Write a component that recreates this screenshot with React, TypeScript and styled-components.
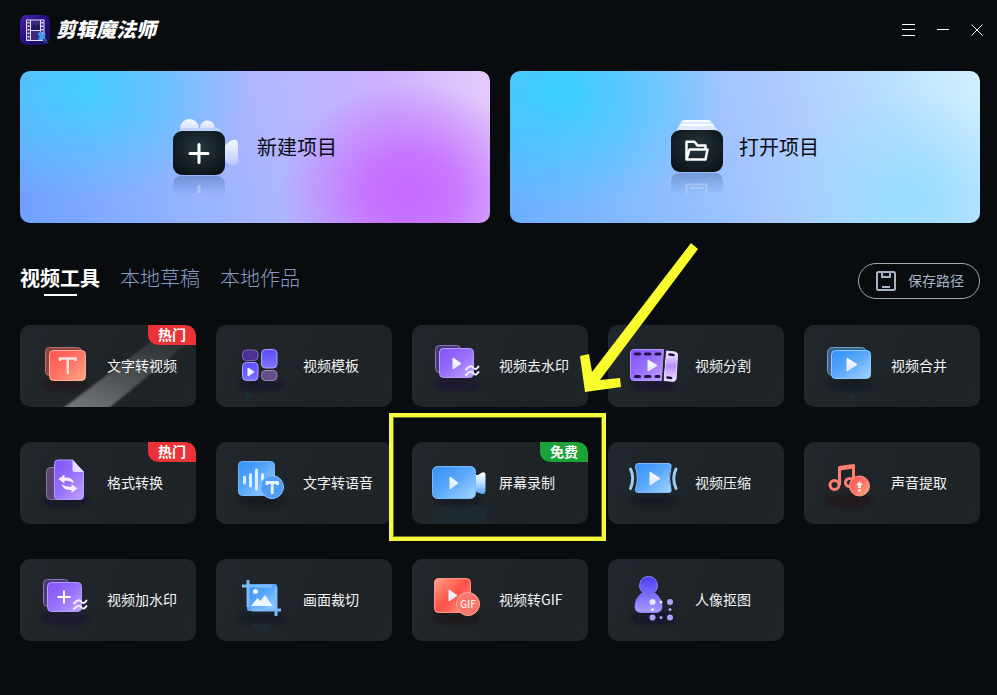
import React from "react";
import styled, { createGlobalStyle } from "styled-components";

const GlobalStyle = createGlobalStyle`
  * { box-sizing: border-box; }
  body { margin: 0; background: #080c0f; }
  button { border: 0; padding: 0; margin: 0; background: none; color: inherit; font: inherit; cursor: pointer; }
  svg { display: block; flex: none; }
`;

const Window = styled.div`
  min-height: 100vh;
  background: #080c0f;
  color: #f2f4f6;
  font-family: "Noto Sans CJK SC", "Noto Sans", sans-serif;
  overflow: hidden;
`;

const Header = styled.header`
  height: 60px;
  display: flex;
  align-items: center;
  justify-content: space-between;
  padding: 0 3px 0 20px;
`;

const Brand = styled.div`
  display: flex;
  align-items: center;
  gap: 6px;
`;

const BrandName = styled.h1`
  margin: 0;
  padding-bottom: 2px;
  font-size: 20px;
  line-height: 30px;
  font-weight: 900;
  font-style: italic;
  color: #fff;
`;

const WindowControls = styled.div`
  display: flex;
`;

const ControlButton = styled.button`
  width: 34px;
  height: 34px;
  display: flex;
  align-items: center;
  justify-content: center;
`;

const Main = styled.main`
  padding: 11px 17px 24px 20px;
`;

const Banners = styled.div`
  display: grid;
  grid-template-columns: 1fr 1fr;
  gap: 20px;
`;

const Banner = styled.button<{ $kind: "new" | "open" }>`
  height: 152px;
  border-radius: 10px;
  display: flex;
  align-items: center;
  justify-content: center;
  gap: 16px;
  color: #080b12;
  font-size: 20px;
  line-height: 30px;
  background: ${(p) =>
    p.$kind === "new"
      ? `radial-gradient(ellipse 130px 110px at 83% 80%, #c66cff 0%, #c66cffd9 35%, #c66cff00 100%),
         radial-gradient(ellipse 170px 110px at 13% 12%, #42ceff 0%, #42ceff00 100%),
         linear-gradient(75deg, #6fa0ff 0%, #8fb2ff 30%, #b2b6ff 55%, #cbb0ff 78%, #e4cdfc 100%)`
      : `radial-gradient(ellipse 150px 110px at 84% 84%, #98dcff 0%, #98dcff00 100%),
         radial-gradient(ellipse 170px 120px at 10% 14%, #38d0ff 0%, #38d0ff00 100%),
         linear-gradient(75deg, #6aaeff 0%, #8cbcff 30%, #b0caff 60%, #b8deff 80%, #d4f0ff 100%)`};
`;

const Toolbar = styled.div`
  margin: 40px 0 26px;
  display: flex;
  align-items: flex-start;
  justify-content: space-between;
`;

const Tabs = styled.nav`
  display: flex;
  gap: 20px;
`;

const Tab = styled.button<{ $active?: boolean }>`
  display: flex;
  flex-direction: column;
  align-items: center;
  font-size: 20px;
  line-height: 30px;
  font-weight: ${(p) => (p.$active ? 700 : 300)};
  color: ${(p) => (p.$active ? "#fff" : "#8a9cc4")};

  &::after {
    content: "";
    width: 33px;
    height: 2px;
    margin-top: 1px;
    background: ${(p) => (p.$active ? "#fff" : "transparent")};
  }
`;

const SaveButton = styled.button`
  height: 36px;
  padding: 0 15px 0 17px;
  display: flex;
  align-items: center;
  gap: 12px;
  border: 1px solid #a3a8b3;
  border-radius: 18px;
  color: #a9b4c8;
  font-size: 14px;
  line-height: 20px;
`;

const ToolGrid = styled.ul`
  margin: 0;
  padding: 0;
  list-style: none;
  display: grid;
  grid-template-columns: repeat(5, minmax(0, 1fr));
  gap: 35px 20px;
`;

const ToolItem = styled.li`
  position: relative;
`;

const ToolCard = styled.button`
  position: relative;
  width: 100%;
  height: 82px;
  display: flex;
  align-items: center;
  gap: 7px;
  border-radius: 10px;
  overflow: hidden;
  background: linear-gradient(110deg, #21272c, #1e2327 60%, #1f2427);
  font-size: 14px;
  line-height: 20px;
  text-align: left;
`;

const ButtonLabel = styled.span`
  position: relative;
  padding-bottom: 2px;
  white-space: nowrap;
`;

const Beam = styled.svg`
  position: absolute;
  left: 0;
  top: 0;
`;

const Badge = styled.span<{ $free?: boolean }>`
  position: absolute;
  top: 0;
  right: 0;
  width: 48px;
  height: 20px;
  line-height: 18px;
  border-radius: 0 10px 0 10px;
  background: ${(p) => (p.$free ? "#1ba337" : "#ea3238")};
  color: #fff;
  font-weight: 700;
  text-align: center;
`;

const Highlight = styled.div`
  position: absolute;
  z-index: 2;
  inset: -29px -18px -17px -23px;
  border: 4px solid #f5fb3a;
  box-shadow: inset 0 0 0 1px #6f7222;
  pointer-events: none;
`;

const Arrow = styled.svg`
  position: absolute;
  z-index: 2;
  left: 166px;
  top: -202px;
  pointer-events: none;
`;

const SharedDefs = styled.svg`
  position: absolute;
`;

const Gradient = ({ id, stops, vertical }: { id: string; stops: string[]; vertical?: boolean }) => (
  <linearGradient id={id} x1="0" y1="0" x2={vertical ? "0" : "1"} y2="1">
    {stops.map((color, i) => (
      <stop key={i} offset={i / (stops.length - 1)} stopColor={color} />
    ))}
  </linearGradient>
);

const Defs = () => (
  <SharedDefs width="0" height="0" aria-hidden>
    <defs>
      <Gradient id="red" stops={["#ff5350", "#ff7367", "#ffab86"]} />
      <Gradient id="redWarm" stops={["#ffa58b", "#ff5147", "#ff9a82"]} />
      <Gradient id="purple" stops={["#8450f8", "#9670fb", "#c2a4ff"]} />
      <Gradient id="indigo" stops={["#5a4df8", "#7d74ff"]} vertical />
      <Gradient id="portrait" stops={["#4a3df5", "#a99cff"]} vertical />
      <Gradient id="blue" stops={["#3190f8", "#5ba9fb", "#a6d6ff"]} />
      <Gradient id="lens" stops={["#ffffff", "#b9ddff", "#5ba4f5"]} vertical />
      <Gradient id="ticket" stops={["#fbf8ff", "#b88dff", "#eee5ff"]} vertical />
      <Gradient id="soft" stops={["#f7faff", "#b8c8ff"]} vertical />
      <Gradient id="light" stops={["#ffffff", "#d7e6ff"]} vertical />
      <Gradient id="logo" stops={["#4b20b0", "#24107c", "#160b50"]} />
      <radialGradient id="ink" cx="0.5" cy="0.4" r="0.75">
        <stop offset="0" stopColor="#26363f" />
        <stop offset="1" stopColor="#080e12" />
      </radialGradient>
      <linearGradient id="mirror" x1="0" y1="0" x2="0" y2="1">
        <stop offset="0" stopColor="#3d5f98" stopOpacity="0.4" />
        <stop offset="1" stopColor="#3d5f98" stopOpacity="0" />
      </linearGradient>
      <linearGradient id="beam" x1="0" y1="1" x2="0.7" y2="0">
        <stop offset="0" stopColor="#fff" stopOpacity="0.4" />
        <stop offset="0.5" stopColor="#fff" stopOpacity="0.22" />
        <stop offset="1" stopColor="#fff" stopOpacity="0.08" />
      </linearGradient>
      <filter id="blur" x="-30%" y="-100%" width="160%" height="300%">
        <feGaussianBlur stdDeviation="3" />
      </filter>
      <filter id="edge">
        <feGaussianBlur stdDeviation="1" />
      </filter>
    </defs>
  </SharedDefs>
);

const ToolIcon = ({ shade, children }: { shade: string; children: React.ReactNode }) => (
  <svg width="80" height="82" viewBox="0 0 80 82" fill="none" aria-hidden>
    <ellipse cx="45" cy="59" rx="22" ry="4" fill={shade} opacity="0.75" filter="url(#blur)" />
    {children}
  </svg>
);

const Play = ({ x, y, w, h }: { x: number; y: number; w: number; h: number }) => (
  <path
    d={`M${x} ${y}L${x + w} ${y + h / 2}L${x} ${y + h}Z`}
    fill="url(#light)"
    stroke="#eef3ff"
    strokeWidth="1"
    strokeLinejoin="round"
  />
);

const Waves = () => (
  <g stroke="#f3edff" strokeWidth="2" strokeLinecap="round">
    <path d="M54 44.5C58 40 60 41 61.5 43C63 45 65 44 66.5 41.5" />
    <path d="M54 50C58 45.5 60 46.5 61.5 48.5C63 50.5 65 49.5 66.5 47" />
  </g>
);

const TextVideoIcon = () => (
  <ToolIcon shade="#2a0e14">
    <rect x="25.5" y="22.5" width="36" height="28" rx="4" fill="#8d4646" stroke="#b5716d" />
    <rect x="29.5" y="25.5" width="36" height="30" rx="4" fill="url(#red)" stroke="#ffad94" />
    <path d="M40 36V33.5H55.5V36M47.8 33.5V49" stroke="#ffe5df" strokeWidth="2.4" />
  </ToolIcon>
);

const TemplateIcon = () => (
  <ToolIcon shade="#120d2a">
    <rect x="26.5" y="25" width="15.500" height="10.500" rx="4" fill="#4c3192" stroke="#8169b5" />
    <rect x="45.5" y="24.5" width="15.500" height="18.500" rx="4" fill="url(#indigo)" stroke="#aaa2ff" />
    <rect x="26.5" y="37.5" width="15.500" height="18" rx="4" fill="url(#indigo)" stroke="#aaa2ff" />
    <rect x="45.5" y="45.5" width="15.500" height="10" rx="4" fill="#644d8a" stroke="#9b86b8" />
    <Play x={32} y={43} w={6} h={8} />
    <path d="M30 66L37 71L30 76Z" fill="#1b3442" opacity="0.6" />
  </ToolIcon>
);

const UnmarkIcon = () => (
  <ToolIcon shade="#1e0b3a">
    <rect x="23.5" y="20.5" width="25" height="27" rx="4" fill="#493778" stroke="#8c78b5" />
    <rect x="27.5" y="23.5" width="34" height="29" rx="4" fill="url(#purple)" stroke="#b99cff" />
    <Play x={41} y={33} w={8} h={11} />
    <Waves />
  </ToolIcon>
);

const SplitIcon = () => (
  <ToolIcon shade="#1e0738">
    <path d="M26 24.5H55.5L54 55.5H26Q22.5 55.5 22.5 52V28Q22.5 24.5 26 24.5Z" fill="url(#purple)" stroke="#b398ff" />
    <path d="M27.500 29H31.500M37.500 29H42M48 29H52M27.500 51.500H31.500M37.500 51.500H42M48 51.500H51" stroke="#241346" strokeWidth="3" strokeLinecap="round" />
    <Play x={40} y={35} w={9} h={11} />
    <path d="M58.500 26L67 27Q69.5 27.5 69.5 30L68 54Q67.5 56.5 65 56.3L56 55.5Z" fill="url(#ticket)" stroke="#eadfff" />
    <path d="M57 25L54.500 56" stroke="#1f2428" strokeWidth="1.5" />
    <path d="M61.500 29.5L65.500 30M59.500 52.500L63 53" stroke="#241346" strokeWidth="2.6" strokeLinecap="round" />
  </ToolIcon>
);

const MergeIcon = () => (
  <ToolIcon shade="#0c1620">
    <rect x="23.5" y="22.5" width="39" height="28" rx="5" fill="#3a6289" stroke="#6fa0c8" />
    <rect x="27.5" y="25.5" width="39" height="28" rx="4" fill="url(#blue)" stroke="#8fc7ff" />
    <Play x={43} y={33} w={10} h={13} />
    <path d="M45 67L54 72L45 77Z" fill="#1b3442" opacity="0.4" />
  </ToolIcon>
);

const ConvertIcon = () => (
  <ToolIcon shade="#12082c">
    <rect x="26.5" y="25.5" width="25" height="32" rx="4" fill="#5a4575" stroke="#8b74a6" />
    <path d="M38 18H52.5L63.5 30V54Q63.5 57.5 60 57.5H38Q34.5 57.5 34.5 54V21.5Q34.5 18 38 18Z" fill="url(#purple)" stroke="#b79bff" />
    <path d="M52.5 17.5L64 30H54.5Q52.5 30 52.5 28Z" fill="#e6dcff" />
    <path d="M38.500 37L44.500 32.500V35.500H47Q53 36 54 41.500Q51 38.800 47 38.800H44.500V41.500Z" fill="#f5efff" />
    <path d="M57.500 46.500L51.500 51V48H49Q43 47.500 41.500 42Q45 44.700 49 44.700H51.500V42Z" fill="#f5efff" />
  </ToolIcon>
);

const SpeechIcon = () => (
  <ToolIcon shade="#0c141e">
    <rect x="22.5" y="19.5" width="36" height="34" rx="4" fill="url(#blue)" stroke="#79baff" />
    <path d="M28.5 35V41M34.5 32.5V44M40.5 28V47M46.5 32.5V38" stroke="#dceeff" strokeWidth="3" strokeLinecap="round" />
    <circle cx="56" cy="45" r="11.5" fill="#519ff5" stroke="#8ac5ff" />
    <path d="M51 43V40.5H61.5V43M56.200 40.5V52" stroke="#e6f4ff" strokeWidth="2.8" />
  </ToolIcon>
);

const RecordIcon = () => (
  <ToolIcon shade="#0c1620">
    <path d="M66 33L70 30.5Q73.5 29.5 73.5 33V49Q73.5 52.5 70 52L64 50V33Z" fill="url(#lens)" />
    <rect x="20.5" y="24.5" width="43" height="32" rx="5" fill="url(#blue)" stroke="#78b9ff" />
    <Play x={38} y={35} w={8} h={12} />
    <path d="M20 64H74V82H20Z" fill="#1b303a" opacity="0.4" />
  </ToolIcon>
);

const CompressIcon = () => (
  <ToolIcon shade="#0e131a">
    <path d="M30 21.5H61Q64 22 63 25Q60 36 63 47Q64 50.5 61 50.5H30Q27 50.5 27.5 47Q31 36 27.5 25Q27 22 30 21.5Z" fill="url(#blue)" stroke="#7cbcff" />
    <path d="M22.5 27Q27 36 22.5 46.5M68 27Q63.5 36 68 46.5" stroke="#a3c9ef" strokeWidth="3" strokeLinecap="round" />
    <Play x={42} y={30} w={10} h={13} />
  </ToolIcon>
);

const AudioIcon = () => (
  <ToolIcon shade="#250b10">
    <g stroke="#ff7d72" strokeWidth="3" strokeLinejoin="round">
      <circle cx="30.5" cy="43" r="4.5" />
      <circle cx="45.5" cy="40.5" r="4" />
      <path d="M35.5 43V25.5L49.5 23.5V40" />
      <path d="M35.5 27L49.5 25" />
    </g>
    <circle cx="55.5" cy="44" r="10" fill="url(#red)" stroke="#ff9a88" />
    <path d="M55.5 39.5L59 43H57V46H54V43H52ZM54 47.5H57V49.5H54Z" fill="#fff1ed" />
  </ToolIcon>
);

const WatermarkIcon = () => (
  <ToolIcon shade="#1e0b3a">
    <rect x="23.5" y="20.5" width="25" height="27" rx="4" fill="#493778" stroke="#8c78b5" />
    <rect x="27.5" y="23.5" width="34" height="29" rx="4" fill="url(#purple)" stroke="#b99cff" />
    <path d="M44 31.5V44.5M37.5 38H50.5" stroke="#fff" strokeWidth="2" />
    <Waves />
  </ToolIcon>
);

const CropIcon = () => (
  <ToolIcon shade="#0c1620">
    <rect x="31" y="25" width="30" height="27" rx="2" fill="url(#blue)" />
    <path d="M32 21V48M26 27H56M60 28V57M36 51H65" stroke="#7bbcf8" strokeWidth="3" />
    <circle cx="39.5" cy="32.5" r="2.5" fill="#edf7ff" />
    <path d="M35 47L41.5 39L44.5 42L49 36L56.5 47Z" fill="#edf7ff" />
    <path d="M36 65H56L49 75L44 70L41 73Z" fill="#1b3a44" opacity="0.4" />
  </ToolIcon>
);

const GifIcon = () => (
  <ToolIcon shade="#1c0b10">
    <rect x="22.5" y="19.5" width="36" height="34" rx="4" fill="url(#redWarm)" stroke="#ff9683" />
    <Play x={37} y={31} w={8} h={11} />
    <circle cx="56" cy="45" r="11.5" fill="#f9766a" stroke="#ffa898" />
    <text x="56" y="49" textAnchor="middle" fontFamily="Noto Sans CJK SC, sans-serif" fontSize="10" fontWeight="500" fill="#fff0ea">
      GIF
    </text>
  </ToolIcon>
);

const PortraitIcon = () => (
  <ToolIcon shade="#0c0b2a">
    <path
      d="M40.5 17.5A9 9 0 0 1 46 33.5Q54 39 54 48Q54 53.5 47 53.5H34Q27 53.5 27 48Q27 39 35 33.5A9 9 0 0 1 40.5 17.5Z"
      fill="url(#portrait)"
      stroke="#8d82ff"
    />
    <g fill="#eae8ff">
      <circle cx="44.5" cy="43" r="3" />
      <circle cx="53" cy="43" r="1.5" />
      <circle cx="44.5" cy="50.5" r="1.5" />
    </g>
    <g fill="#aaa3ff">
      <circle cx="62" cy="43" r="3" />
      <circle cx="62" cy="50.5" r="1.5" />
      <circle cx="44.5" cy="58.5" r="3" />
      <circle cx="53" cy="58.5" r="1.5" />
      <circle cx="62" cy="58.5" r="3" />
    </g>
  </ToolIcon>
);

const LogoIcon = () => (
  <svg width="30" height="30" viewBox="0 0 30 30" fill="none" aria-hidden>
    <rect width="30" height="30" rx="7" fill="url(#logo)" />
    <rect x="6.5" y="5" width="17.5" height="20.5" fill="#3a2a80" stroke="#e6dcff" />
    <path d="M10.5 5V25M20.5 5V25M10.5 15.5H20.5" stroke="#e6dcff" />
    <path d="M8.5 7V25M22.3 7V25" stroke="#e6dcff" strokeWidth="2" strokeDasharray="1.5 2" />
    <path d="M11 13L14 9L16 12L18 9L20 13V15H11Z" fill="#241560" />
    <path d="M21 16L22.5 19L26 19.5L24 22L27 26L25 28L22 24.5L18 25L19.5 21.5L17.5 18.5Z" fill="#3f9cf2" />
    <path d="M24 23.5L28 28L26.5 29L22.5 25Z" fill="#193a78" />
  </svg>
);

const CameraIcon = () => (
  <svg width="68" height="100" viewBox="0 0 68 100" fill="none" aria-hidden>
    <circle cx="16.5" cy="31.5" r="9.5" fill="url(#soft)" />
    <circle cx="34.5" cy="31" r="7.5" fill="url(#soft)" />
    <rect x="6" y="31" width="42" height="12" rx="5" fill="#bdd3ff" />
    <path d="M52 49Q56 44 60 43Q65 42 65 48V62Q65 68 60 68Q56 67.5 52 64Z" fill="url(#soft)" />
    <rect y="34" width="52" height="44" rx="9" fill="url(#ink)" />
    <path d="M26 47.5V65.5M17 56.5H35" stroke="#fff" strokeWidth="3" strokeLinecap="round" />
    <path d="M0 88Q0 79 9 79H43Q52 79 52 88V98H0Z" fill="url(#mirror)" />
    <path d="M26 88V96" stroke="#fff" strokeOpacity="0.3" strokeWidth="3" />
  </svg>
);

const FolderIcon = () => (
  <svg width="52" height="100" viewBox="0 0 52 100" fill="none" aria-hidden>
    <path d="M11 24Q12 23 14 23H36Q38 23 40 24L47 34H5Z" fill="#dce9ff" />
    <path d="M13 23H38L40 25H10ZM10 27H41L43 29H8Z" fill="#f8fbff" />
    <rect y="33" width="52" height="42" rx="9" fill="url(#ink)" />
    <path d="M15.5 62.5V44.8H23.5L26.5 48.5H34.5V52M15.5 62.5L18.5 52.5H36.5L34.5 62.5Z" stroke="#fff" strokeWidth="2.5" strokeLinejoin="round" />
    <path d="M0 85Q0 76 9 76H43Q52 76 52 85V97H0Z" fill="url(#mirror)" />
    <path d="M15.5 96V87.5H35.5V96M18 91H33" stroke="#d6e6ff" strokeOpacity="0.4" strokeWidth="2" />
  </svg>
);

const SaveIcon = () => (
  <svg width="20" height="20" viewBox="0 0 20 20" fill="none" stroke="#a9b4c8" strokeWidth="2" aria-hidden>
    <rect x="1" y="1" width="18" height="18" rx="1.5" />
    <path d="M6 1V6H14V1M6 16H14" />
  </svg>
);

type Tool = { label: string; Icon: React.FC; hot?: boolean; free?: boolean; beam?: boolean };

const tools: Tool[] = [
  { label: "文字转视频", Icon: TextVideoIcon, hot: true, beam: true },
  { label: "视频模板", Icon: TemplateIcon },
  { label: "视频去水印", Icon: UnmarkIcon },
  { label: "视频分割", Icon: SplitIcon },
  { label: "视频合并", Icon: MergeIcon },
  { label: "格式转换", Icon: ConvertIcon, hot: true },
  { label: "文字转语音", Icon: SpeechIcon },
  { label: "屏幕录制", Icon: RecordIcon, free: true },
  { label: "视频压缩", Icon: CompressIcon },
  { label: "声音提取", Icon: AudioIcon },
  { label: "视频加水印", Icon: WatermarkIcon },
  { label: "画面裁切", Icon: CropIcon },
  { label: "视频转GIF", Icon: GifIcon },
  { label: "人像抠图", Icon: PortraitIcon },
];

const ToolEntry = ({ label, Icon, hot, free, beam }: Tool) => (
  <ToolItem>
    <ToolCard type="button">
      <Icon />
      {beam && (
        <Beam width="176" height="82" viewBox="0 0 176 82" aria-hidden>
          <path d="M42 84L132 16H170L88 84Z" fill="url(#beam)" filter="url(#edge)" />
        </Beam>
      )}
      <ButtonLabel>{label}</ButtonLabel>
      {hot && <Badge>热门</Badge>}
      {free && <Badge $free>免费</Badge>}
    </ToolCard>
    {free && (
      <>
        <Highlight />
        <Arrow width="122" height="154" viewBox="578 240 122 154" aria-hidden>
          <path d="M691 243L698 249L600 380L620 378L621 387L585 392L580 356L589 354L592 372Z" fill="#f9fd2e" />
        </Arrow>
      </>
    )}
  </ToolItem>
);

export default function App() {
  return (
    <Window>
      <GlobalStyle />
      <Defs />
      <Header>
        <Brand>
          <LogoIcon />
          <BrandName>剪辑魔法师</BrandName>
        </Brand>
        <WindowControls>
          <ControlButton type="button" aria-label="菜单">
            <svg width="14" height="12" viewBox="0 0 14 12" stroke="#fff" aria-hidden>
              <path d="M0 0.5H13M0 5.5H13M0 11.5H13" />
            </svg>
          </ControlButton>
          <ControlButton type="button" aria-label="最小化">
            <svg width="12" height="12" viewBox="0 0 12 12" stroke="#fff" aria-hidden>
              <path d="M0 5.5H12" />
            </svg>
          </ControlButton>
          <ControlButton type="button" aria-label="关闭">
            <svg width="12" height="12" viewBox="0 0 12 12" stroke="#fff" aria-hidden>
              <path d="M0.5 0.5L11.5 11.5M11.5 0.5L0.5 11.5" />
            </svg>
          </ControlButton>
        </WindowControls>
      </Header>
      <Main>
        <Banners>
          <Banner type="button" $kind="new">
            <CameraIcon />
            新建项目
          </Banner>
          <Banner type="button" $kind="open">
            <FolderIcon />
            打开项目
          </Banner>
        </Banners>
        <Toolbar>
          <Tabs>
            <Tab type="button" $active>视频工具</Tab>
            <Tab type="button">本地草稿</Tab>
            <Tab type="button">本地作品</Tab>
          </Tabs>
          <SaveButton type="button">
            <SaveIcon />
            <ButtonLabel>保存路径</ButtonLabel>
          </SaveButton>
        </Toolbar>
        <ToolGrid>
          {tools.map((tool) => (
            <ToolEntry key={tool.label} {...tool} />
          ))}
        </ToolGrid>
      </Main>
    </Window>
  );
}
